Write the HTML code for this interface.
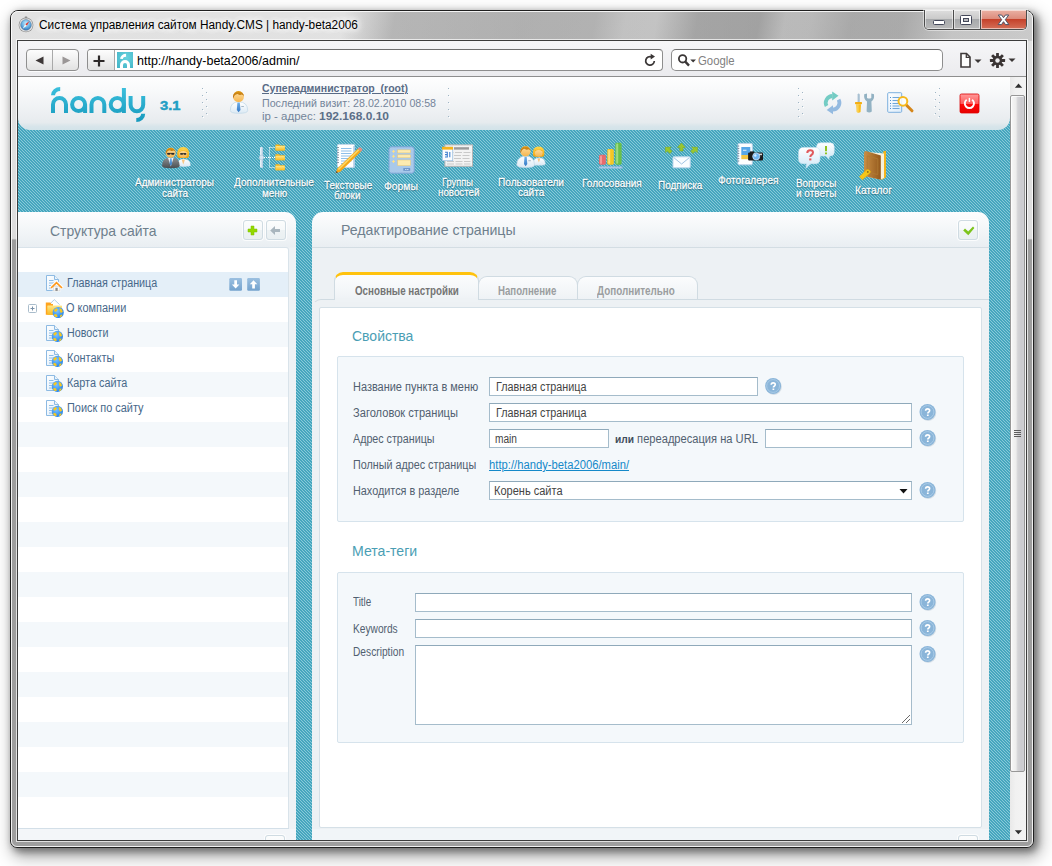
<!DOCTYPE html>
<html lang="ru">
<head>
<meta charset="utf-8">
<title>Handy.CMS</title>
<style>
*{box-sizing:border-box;margin:0;padding:0}
html,body{width:1052px;height:866px;overflow:hidden;background:#fff}
body{font-family:"Liberation Sans",sans-serif;font-size:12px;color:#4a5b6c;position:relative}
.abs{position:absolute}
.t{position:absolute;white-space:nowrap;transform-origin:0 50%;line-height:1}

/* ---------- window frame ---------- */
#shadow{left:10px;top:10px;width:1024px;height:838px;border-radius:8px;
  box-shadow:3px 3px 7px 1px rgba(0,0,0,.40),4px 7px 16px 3px rgba(0,0,0,.30)}
#win{left:10px;top:10px;width:1024px;height:838px;border-radius:8px 8px 7px 7px;border:1px solid #1f1f1f;overflow:hidden;
  background:#c9c9c9}
#glass{left:0;top:0;width:1022px;height:836px;
  background:linear-gradient(180deg,#e2e2e2 0,#dddddd 26%,#dbdbdb 27%,#dcdcdc 27.2%,#9d9d9d 27.4%,#9e9e9e 100%)}
#tglass{left:0;top:0;width:1022px;height:30px;
  background:linear-gradient(100deg,rgba(80,80,80,0) 0,rgba(80,80,80,0) 32.500%,rgba(80,80,80,.30) 37.500%,rgba(80,80,80,.34) 50%,rgba(80,80,80,.33) 57%,rgba(80,80,80,.22) 60%,rgba(80,80,80,.21) 63%,rgba(80,80,80,.42) 67%,rgba(80,80,80,.44) 73%,rgba(80,80,80,.27) 75.500%,rgba(80,80,80,.28) 78%,rgba(80,80,80,.39) 82%,rgba(80,80,80,.38) 87%,rgba(80,80,80,.20) 92%,rgba(80,80,80,.16) 100%)}
#glassin{left:0;top:0;width:1022px;height:836px;border:1px solid rgba(255,255,255,.85);border-radius:7px 7px 6px 6px}
#client{left:17px;top:40px;width:1010px;height:801px;border:1px solid #3c3c3c;background:#fff;overflow:hidden}
#clientglow{left:16px;top:39px;width:1012px;height:803px;border:1px solid rgba(255,255,255,.7)}


/* ---------- title ---------- */
#ttl{font-size:12px;color:#000;text-shadow:0 0 6px #fff,0 0 8px #fff,0 0 10px #fff,0 0 12px rgba(255,255,255,.9)}
#cap{left:924px;top:10px;width:103px;height:20px;border:1px solid #4b4b4b;border-top:none;border-radius:0 0 5px 5px;overflow:hidden;box-shadow:0 0 0 1px rgba(255,255,255,.45)}
#cap div{position:absolute;top:0;height:19px;box-shadow:inset 0 0 0 1px rgba(255,255,255,.55)}
.cg{background:linear-gradient(#dedede 0,#c9c9c9 48%,#a7a9ab 50%,#b9b9b9 100%)}
.cr{background:linear-gradient(#eab1a4 0,#dc8a7a 48%,#c5422b 50%,#d56f58 100%)}

/* ---------- toolbar ---------- */
#tb{left:0;top:0;width:1008px;height:36px;background:linear-gradient(#f6f6f8,#ebebee);border-bottom:1px solid #8e8e8e}
.btn{border:1px solid #8f8f8f;border-radius:4px;background:linear-gradient(#fdfdfd,#e2e2e2);box-shadow:0 1px 0 rgba(255,255,255,.8)}
.inp{border:1px solid #8e8e8e;border-top-color:#6f6f6f;border-radius:4px;background:#fff}


/* ---------- cms header ---------- */
#hd{left:0;top:0;width:992px;height:53px;border-radius:0 0 12px 12px;background:linear-gradient(#fefefe 0,#f9fafb 22%,#f2f4f6 48%,#ebeef1 74%,#e6ebee 86%,#d8e5ea 93%,#d2e3e9 100%)}
.dots{width:5px;height:32px;top:11px;background:
  radial-gradient(circle at 1px 1px,#aebdc8 0,#aebdc8 .7px,transparent .9px) 0 0/5px 8px,
  radial-gradient(circle at 1px 1px,#aebdc8 0,#aebdc8 .7px,transparent .9px) 3px 4px/5px 8px}
.u1{font-family:"Liberation Sans",sans-serif;font-weight:bold;font-size:10px;color:#596b86;text-decoration:underline}
.u2{font-size:11px;color:#74859a}
.ml{font-size:11px;color:#fff;-webkit-text-stroke:.3px rgba(255,255,255,.9);text-shadow:0 1px 1px rgba(25,85,105,.75),0 0 2px rgba(25,85,105,.45)}
.mi{position:absolute;white-space:nowrap;text-align:center;color:#fff;font-size:10.5px;line-height:10px;transform:translateX(-50%);text-shadow:0 1px 1px rgba(20,80,100,.55)}


/* ---------- panels (coords relative to #page: x-18, y-77) ---------- */
#lp{left:0;top:135px;width:278px;height:640px;border-radius:0 11px 0 0;background:linear-gradient(#fdfdfe 0,#f3f6f8 18px,#e9eef2 35px,#eef2f5 36px,#eef2f5 100%)}
#lpin{left:0;top:170px;width:271px;height:582px;border-radius:0 3px 0 0;background:#fff;border:1px solid #d9e3ea;border-left:none}
.row{position:absolute;left:0;width:270px;height:25px;background:#f4f8fb}
.sel{background:#e4eff8}
.tr{position:absolute;white-space:nowrap;font-size:12px;line-height:1;color:#47688a;transform-origin:0 50%}
.hdt{font-size:15px;color:#6e7f8d}
.sq{position:absolute;width:20px;height:20px;border:1px solid #cfdbe2;border-radius:3px;background:linear-gradient(#fcfdfd 0,#f6f9fa 50%,#edf2f4 52%,#eaf0f2 100%);box-shadow:0 0 0 1px rgba(255,255,255,.75)}
#rp{left:294px;top:135px;width:677px;height:640px;border-radius:11px 11px 0 0;background:linear-gradient(#fdfdfe 0,#f3f6f8 18px,#e9eef2 35px,#d3dde3 35px,#d3dde3 36px,#edf1f4 36px,#edf1f4 100%)}
#tabwrap{left:294px;top:222px;width:677px;height:560px;border-top:1px solid #d0dbe2;border-left:1px solid rgba(208,219,226,0);border-radius:9px 0 0 0;background:#edf1f4}
#rpin{left:301px;top:230px;width:663px;height:521px;background:#fff;border:1px solid #d5e0e7;border-radius:2px}
.tab{position:absolute;border:1px solid #d0dbe2;border-bottom:none;border-radius:9px 9px 0 0;background:linear-gradient(#fbfcfd,#eef2f5)}
.tabt{position:absolute;white-space:nowrap;font-weight:bold;font-size:12px;line-height:1;transform-origin:0 50%}
.h2{position:absolute;white-space:nowrap;font-size:15px;line-height:1;color:#4a9eb4;transform-origin:0 50%}
.fs{position:absolute;background:#f4f8fb;border:1px solid #d6e3ec;border-radius:2px}
.lb{position:absolute;white-space:nowrap;font-size:12px;line-height:1;color:#516070;transform-origin:0 50%}
.fi{position:absolute;height:19px;background:#fff;border:1px solid #a5bccb;border-top-color:#8fa9ba}
.fv{position:absolute;white-space:nowrap;font-size:12px;line-height:1;color:#444;transform-origin:0 50%}

/* ---------- page ---------- */
#page{left:0;top:36px;width:992px;height:763px;overflow:hidden;background:#4faac2}
#sb{left:992px;top:36px;width:16px;height:763px;background:linear-gradient(90deg,#e9e9e9,#f1f1f1 35%,#f3f3f3)}
</style>
</head>
<body>
<div id="shadow" class="abs"></div>
<div id="win" class="abs">
  <div id="glass" class="abs"></div>
  <div id="tglass" class="abs"></div>
  <div id="glassin" class="abs"></div>
</div>

<!-- title bar -->
<svg class="abs" style="left:18px;top:16px" width="16" height="17" viewBox="0 0 18 19">
  <defs><radialGradient id="cmp" cx="50%" cy="35%" r="65%"><stop offset="0" stop-color="#c9ebfc"/><stop offset=".6" stop-color="#62aee3"/><stop offset="1" stop-color="#2f6fb4"/></radialGradient></defs>
  <circle cx="9" cy="10" r="8.300" fill="#8f8f8f"/><circle cx="9" cy="10" r="7.500" fill="#ececec"/><circle cx="9" cy="10" r="6.100" fill="url(#cmp)" stroke="#6d7f92" stroke-width=".6"/>
  <path d="M12.800 5.800 L9.900 10.900 L8.100 9.300 Z" fill="#e2382c"/><path d="M5.200 14.200 L8.100 9.300 L9.900 10.900 Z" fill="#f6f6f6"/>
  <rect x="7.600" y="0.600" width="2.800" height="2" rx=".6" fill="#8d8d8d"/>
</svg>
<div id="ttl" class="t" style="left:39.0px;top:18.7px;transform:scaleX(0.985)">Система управления сайтом Handy.CMS | handy-beta2006</div>
<div id="cap" class="abs">
  <div class="cg" style="left:0;width:28px"></div>
  <div class="cg" style="left:28px;width:27px;border-left:1px solid #4b4b4b"></div>
  <div class="cr" style="left:55px;width:47px;border-left:1px solid #4b4b4b"></div>
</div>
<svg class="abs" style="left:924px;top:10px" width="103" height="20" viewBox="0 0 103 20">
  <rect x="9.5" y="10.5" width="11" height="4" rx="1" fill="#fff" stroke="#44485a" stroke-width="1"/>
  <rect x="36.500" y="5.500" width="11" height="9" rx="1" fill="#fff" stroke="#44485a" stroke-width="1"/>
  <rect x="39.500" y="8.500" width="5" height="3" fill="#b9babd" stroke="#44485a" stroke-width="1"/>
  <path d="M74.300 5 L77.600 5 L79.500 7.700 L81.400 5 L84.700 5 L81.300 9.700 L84.900 14.600 L81.500 14.600 L79.500 11.700 L77.500 14.600 L74.100 14.600 L77.700 9.700 Z" fill="#fff" stroke="#4d5468" stroke-width="1" stroke-linejoin="round"/>
</svg>
<div id="clientglow" class="abs"></div>
<div id="client" class="abs">
  <div id="tb" class="abs">
    <div class="abs btn" style="left:8px;top:8px;width:53px;height:22px"></div>
    <div class="abs" style="left:34px;top:9px;width:1px;height:20px;background:#a9a9a9"></div>
    <svg class="abs" style="left:8px;top:9px" width="53" height="21" viewBox="0 0 53 21"><path d="M17.500 6.500 L17.500 14.500 L9.500 10.500 Z" fill="#3d3737"/><path d="M36.500 6.500 L36.500 14.500 L44.500 10.500 Z" fill="#9a9696"/></svg>
    <div class="abs inp" style="left:69px;top:8px;width:576px;height:22px"></div>
    <div class="abs" style="left:70px;top:9px;width:27px;height:20px;border-radius:3px 0 0 3px;background:linear-gradient(#fdfdfd,#e2e2e2);border-right:1px solid #a9a9a9"></div>
    <svg class="abs" style="left:74px;top:13px" width="14" height="14" viewBox="0 0 14 14"><path d="M7 1.500 V12.500 M1.500 7 H12.500" stroke="#2d2929" stroke-width="2.200" fill="none"/></svg>
    <svg class="abs" style="left:99px;top:11px" width="16" height="16" viewBox="0 0 16 16"><defs><radialGradient id="fv" cx=".6" cy=".35" r=".8"><stop offset="0" stop-color="#66d2de"/><stop offset="1" stop-color="#45b6c8"/></radialGradient></defs><rect width="16" height="16" fill="url(#fv)"/><path d="M4.500 16 V13 A3.500 3.500 0 0 1 11.500 13 V16" fill="none" stroke="#fff" stroke-width="3"/><path d="M4.500 6.900 A4.600 3.700 0 0 1 9.100 3.300" fill="none" stroke="#fff" stroke-width="2.900"/></svg>
    <div id="url" class="t" style="left:119.0px;top:13.1px;font-size:13px;color:#000;transform:scaleX(0.961)">http://handy-beta2006/admin/</div>
    <svg class="abs" style="left:625px;top:12px" width="15" height="15" viewBox="0 0 15 15"><path d="M11.300 8 A4.300 4.300 0 1 1 8.600 3.900" fill="none" stroke="#3a3636" stroke-width="1.700"/><path d="M7.700 0.700 L12 3.600 L7.700 6.600 Z" fill="#3a3636"/></svg>
    <div class="abs inp" style="left:653px;top:8px;width:272px;height:22px;border-radius:5px"></div>
    <svg class="abs" style="left:659px;top:12px" width="22" height="15" viewBox="0 0 22 15"><circle cx="5.600" cy="5.800" r="3.700" fill="none" stroke="#3a3636" stroke-width="1.800"/><path d="M8.300 8.600 L12 12.600" stroke="#3a3636" stroke-width="2.300"/><path d="M13.300 6.500 H19 L16.150 9.600 Z" fill="#3a3636"/></svg>
    <div id="ggl" class="t" style="left:680.0px;top:13.1px;font-size:13px;color:#818181;transform:scaleX(0.873)">Google</div>
    <svg class="abs" style="left:941px;top:11px" width="26" height="17" viewBox="0 0 26 17"><path d="M2 1.500 H7.500 L11 5 V15 H2 Z" fill="#fdfdfd" stroke="#3f3a3a" stroke-width="1.600" stroke-linejoin="miter"/><path d="M7.300 1.500 V5.300 H11" fill="none" stroke="#3f3a3a" stroke-width="1.300"/><path d="M15.500 7.500 H22.500 L19 11 Z" fill="#3a3636"/></svg>
    <svg class="abs" style="left:970px;top:10px" width="30" height="19" viewBox="0 0 30 19"><g transform="translate(9.500 9.500)" fill="#3a3434"><circle r="4.800"/><g id="tt"><rect x="-1.400" y="-7.600" width="2.800" height="15.200" rx=".4"/></g><use href="#tt" transform="rotate(45)"/><use href="#tt" transform="rotate(90)"/><use href="#tt" transform="rotate(135)"/><circle r="2.200" fill="#eeeef0"/></g><path d="M20.500 7.500 H27.500 L24 11 Z" fill="#3a3636"/></svg>
  </div>
  <div id="page" class="abs">
    <svg class="abs" style="left:0;top:0" width="992" height="763" shape-rendering="crispEdges">
      <defs><pattern id="st" width="3" height="3" patternUnits="userSpaceOnUse">
        <rect width="3" height="3" fill="#45a6be"/>
        <rect x="0" y="0" width="1" height="1" fill="#88c9d9"/>
        <rect x="1" y="1" width="1" height="1" fill="#88c9d9"/>
        <rect x="2" y="2" width="1" height="1" fill="#88c9d9"/>
      </pattern></defs>
      <rect width="992" height="763" fill="url(#st)"/>
    </svg>
    <div id="hd" class="abs"></div>
    <!-- logo -->
    <svg class="abs" style="left:0;top:0" width="200" height="53" viewBox="18 77 200 53">
      <defs><linearGradient id="lg" gradientUnits="userSpaceOnUse" x1="0" y1="87" x2="0" y2="122"><stop offset="0" stop-color="#3cc0dd"/><stop offset="1" stop-color="#1799bd"/></linearGradient></defs>
      <g fill="none" stroke="url(#lg)" stroke-width="4">
        <path d="M53 95.300 A7.200 6.500 0 0 1 60.200 89"/>
        <path d="M53 113 V104.500 A6.500 6.500 0 0 1 66 104.500 V113"/>
        <circle cx="78.600" cy="104.500" r="6.500"/><path d="M85.100 104.500 V113"/>
        <path d="M91.500 113 V104.500 A6.400 6.500 0 0 1 104.300 104.500 V113"/>
        <circle cx="117.300" cy="104.500" r="6.600"/><path d="M123.900 88 V113"/>
        <path d="M130.600 96 V104.800 A6.300 6.500 0 0 0 143.200 104.800 V96"/>
        <path d="M143.200 113.800 A6.900 6.200 0 0 1 136.300 120"/>
      </g>
    </svg>
    <div id="ver" class="t" style="left:142.4px;top:21.9px;font-size:13px;font-weight:bold;color:#219fc4;-webkit-text-stroke:.45px #219fc4;transform:scaleX(1.134)">3.1</div>
    <div id="u1" class="t u1" style="left:244.0px;top:7.0px;transform:scaleX(1.051)">Суперадминистратор&nbsp; (root)</div>
    <div id="u2" class="t u2" style="left:244.0px;top:21.1px;transform:scaleX(0.969)">Последний визит: 28.02.2010 08:58</div>
    <div id="u3" class="t u2" style="left:244.0px;top:33.7px;transform:scaleX(1.042)">ip - адрес: <b id="ip" style="color:#5c6f88;font-size:11.5px">192.168.0.10</b></div>
    <div id="m1a" class="t ml" style="left:117.4px;top:100.1px;transform:scaleX(0.905)">Администраторы</div>
    <div id="m1b" class="t ml" style="left:144.0px;top:110.5px;transform:scaleX(0.903)">сайта</div>
    <div id="m2a" class="t ml" style="left:216.1px;top:100.1px;transform:scaleX(0.916)">Дополнительные</div>
    <div id="m2b" class="t ml" style="left:243.5px;top:110.5px;transform:scaleX(0.899)">меню</div>
    <div id="m3a" class="t ml" style="left:305.8px;top:103.4px;transform:scaleX(0.900)">Текстовые</div>
    <div id="m3b" class="t ml" style="left:316.4px;top:113.4px;transform:scaleX(0.897)">блоки</div>
    <div id="m4" class="t ml" style="left:366.3px;top:103.8px;transform:scaleX(0.940)">Формы</div>
    <div id="m5a" class="t ml" style="left:424.4px;top:100.1px;transform:scaleX(0.843)">Группы</div>
    <div id="m5b" class="t ml" style="left:420.0px;top:109.8px;transform:scaleX(0.888)">новостей</div>
    <div id="m6a" class="t ml" style="left:480.0px;top:100.1px;transform:scaleX(0.919)">Пользователи</div>
    <div id="m6b" class="t ml" style="left:499.5px;top:109.9px;transform:scaleX(0.910)">сайта</div>
    <div id="m7" class="t ml" style="left:564.3px;top:101.3px;transform:scaleX(0.913)">Голосования</div>
    <div id="m8" class="t ml" style="left:640.4px;top:102.5px;transform:scaleX(0.906)">Подписка</div>
    <div id="m9" class="t ml" style="left:699.7px;top:98.4px;transform:scaleX(0.918)">Фотогалерея</div>
    <div id="m10a" class="t ml" style="left:777.9px;top:100.8px;transform:scaleX(0.894)">Вопросы</div>
    <div id="m10b" class="t ml" style="left:777.9px;top:111.2px;transform:scaleX(0.905)">и ответы</div>
    <div id="m11" class="t ml" style="left:836.7px;top:107.5px;transform:scaleX(0.925)">Каталог</div>
    <!-- left panel -->
    <div id="lp" class="abs"></div>
    <div id="lpin" class="abs"></div>
    <div class="row sel" style="top:195px"></div><div class="row" style="top:245px"></div><div class="row" style="top:295px"></div><div class="row" style="top:345px"></div><div class="row" style="top:395px"></div><div class="row" style="top:445px"></div><div class="row" style="top:495px"></div><div class="row" style="top:545px"></div><div class="row" style="top:595px"></div><div class="row" style="top:645px"></div><div class="row" style="top:695px"></div>
    <div class="abs" style="left:0;top:751px;width:271px;height:1px;background:#d3dfe8"></div><div class="abs" style="left:0;top:752px;width:278px;height:11px;background:#f3f6f9"></div>
    <div id="lpt" class="tr hdt" style="left:31.5px;top:145.7px;transform:scaleX(0.929)">Структура сайта</div>
    <div class="sq" style="left:225px;top:143px"></div>
    <div class="sq" style="left:248px;top:143px"></div>
    <div class="sq" style="left:247px;top:758px"></div>
    <div id="n1" class="tr" style="left:48.9px;top:200.2px;transform:scaleX(0.896)">Главная страница</div>
    <div id="n2" class="tr" style="left:47.9px;top:225.2px;transform:scaleX(0.911)">О компании</div>
    <div id="n3" class="tr" style="left:48.9px;top:250.2px;transform:scaleX(0.891)">Новости</div>
    <div id="n4" class="tr" style="left:48.9px;top:275.2px;transform:scaleX(0.914)">Контакты</div>
    <div id="n5" class="tr" style="left:48.9px;top:300.2px;transform:scaleX(0.902)">Карта сайта</div>
    <div id="n6" class="tr" style="left:48.9px;top:325.2px;transform:scaleX(0.910)">Поиск по сайту</div>

    <!-- right panel -->
    <div id="rp" class="abs"></div>
    <div id="rpt" class="tr hdt" style="left:323.0px;top:144.5px;transform:scaleX(0.941)">Редактирование страницы</div>
    <div class="sq" style="left:940px;top:143px"></div>
    <div class="tab" style="left:460px;top:199px;width:100px;height:24px"></div>
    <div class="tab" style="left:559px;top:199px;width:121px;height:24px"></div>
    <div id="tabwrap" class="abs"></div>
    <div class="tab" style="left:316px;top:195px;width:145px;height:28px;border-top:3px solid #ffc20d;background:linear-gradient(#fbfcfd 0,#f4f7f9 60%,#eef2f5 100%)"></div>
    <div class="abs" style="left:317px;top:221px;width:143px;height:4px;background:#eef2f5"></div>
    <div id="tb1" class="tabt" style="left:337.0px;top:207.6px;color:#747474;transform:scaleX(0.815)">Основные настройки</div>
    <div id="tb2" class="tabt" style="left:480.4px;top:207.6px;color:#9b9ea0;transform:scaleX(0.804)">Наполнение</div>
    <div id="tb3" class="tabt" style="left:579.4px;top:207.6px;color:#9b9ea0;transform:scaleX(0.822)">Дополнительно</div>
    <div id="rpin" class="abs"></div>
    <div class="abs" style="left:294px;top:752px;width:677px;height:11px;background:#f1f5f8"></div>
    <div class="sq" style="left:940px;top:758px"></div>
    <div id="h21" class="h2" style="left:334.0px;top:251.3px;transform:scaleX(0.932)">Свойства</div>
    <div class="fs" style="left:319px;top:279px;width:627px;height:166px"></div>
    <div id="l1" class="lb" style="left:334.8px;top:303.8px;transform:scaleX(0.913)">Название пункта в меню</div>
    <div id="l2" class="lb" style="left:334.8px;top:329.8px;transform:scaleX(0.925)">Заголовок страницы</div>
    <div id="l3" class="lb" style="left:334.8px;top:355.8px;transform:scaleX(0.892)">Адрес страницы</div>
    <div id="l4" class="lb" style="left:334.8px;top:381.8px;transform:scaleX(0.897)">Полный адрес страницы</div>
    <div id="l5" class="lb" style="left:334.8px;top:407.8px;transform:scaleX(0.904)">Находится в разделе</div>
    <div class="fi" style="left:471px;top:300px;width:269px"></div>
    <div class="fi" style="left:471px;top:326px;width:423px"></div>
    <div class="fi" style="left:471px;top:352px;width:120px"></div>
    <div class="fi" style="left:747px;top:352px;width:147px"></div>
    <div class="fi" style="left:471px;top:404px;width:423px"></div>
    <div id="v1" class="fv" style="left:478.3px;top:303.8px;transform:scaleX(0.898)">Главная страница</div>
    <div id="v2" class="fv" style="left:478.3px;top:329.8px;transform:scaleX(0.898)">Главная страница</div>
    <div id="v3" class="fv" style="left:477.0px;top:355.8px;transform:scaleX(0.846)">main</div>
    <div id="v4" class="lb" style="left:597.0px;top:355.8px;transform:scaleX(0.927)"><b style="font-size:11px;color:#3f4d5c">или</b> переадресация на URL</div>
    <div id="v5" class="fv" style="left:471.0px;top:381.8px;color:#1589c9;text-decoration:underline;transform:scaleX(0.937)">http://handy-beta2006/main/</div>
    <div id="v6" class="fv" style="left:476.0px;top:407.8px;transform:scaleX(0.918)">Корень сайта</div>
    <svg class="abs" style="left:881px;top:412px" width="9" height="5" viewBox="0 0 9 5"><path d="M0.500 0 H8.500 L4.500 4.500 Z" fill="#111"/></svg>
    <div id="h22" class="h2" style="left:334.0px;top:466.2px;transform:scaleX(0.939)">Мета-теги</div>
    <div class="fs" style="left:319px;top:495px;width:627px;height:171px"></div>
    <div id="l6" class="lb" style="left:334.8px;top:519.4px;transform:scaleX(0.819)">Title</div>
    <div id="l7" class="lb" style="left:334.8px;top:545.6px;transform:scaleX(0.848)">Keywords</div>
    <div id="l8" class="lb" style="left:334.8px;top:569.0px;transform:scaleX(0.851)">Description</div>
    <div class="fi" style="left:397px;top:516px;width:497px"></div>
    <div class="fi" style="left:397px;top:542px;width:497px"></div>
    <div class="fi" style="left:397px;top:568px;width:497px;height:80px"></div>
    <svg class="abs" style="left:883px;top:637px" width="10" height="10" viewBox="0 0 10 10"><path d="M1 9 L9 1 M5 9 L9 5" stroke="#6b6b6b" stroke-width="1"/></svg>
    <!-- ===== icon overlay (screen coordinates) ===== -->
    <svg class="abs" style="left:0;top:0" width="992" height="763" viewBox="18 77 992 763">
      <defs>
        <linearGradient id="gFace" x1="0" y1="0" x2="0" y2="1"><stop offset="0" stop-color="#fde0a4"/><stop offset="1" stop-color="#f7b54e"/></linearGradient>
        <linearGradient id="gHair" x1="0" y1="0" x2="0" y2="1"><stop offset="0" stop-color="#dd9a17"/><stop offset="1" stop-color="#a85a0c"/></linearGradient>
        <linearGradient id="gBlond" x1="0" y1="0" x2="0" y2="1"><stop offset="0" stop-color="#fdd54a"/><stop offset="1" stop-color="#f0a512"/></linearGradient>
        <linearGradient id="gShirt" x1="0" y1="0" x2="0" y2="1"><stop offset="0" stop-color="#ffffff"/><stop offset="1" stop-color="#dbe9f4"/></linearGradient>
        <linearGradient id="gSuit" x1="0" y1="0" x2="0" y2="1"><stop offset="0" stop-color="#8f9396"/><stop offset="1" stop-color="#4a4d50"/></linearGradient>
        <linearGradient id="gTie" x1="0" y1="0" x2="0" y2="1"><stop offset="0" stop-color="#6fb0ea"/><stop offset="1" stop-color="#3478c4"/></linearGradient>
        <linearGradient id="gFold" x1="0" y1="0" x2="0" y2="1"><stop offset="0" stop-color="#fee88a"/><stop offset="1" stop-color="#f8b91f"/></linearGradient>
        <linearGradient id="gPage" x1="0" y1="0" x2="1" y2="1"><stop offset="0" stop-color="#ffffff"/><stop offset="1" stop-color="#dcecfa"/></linearGradient>
        <linearGradient id="gRed" x1="0" y1="0" x2="0" y2="1"><stop offset="0" stop-color="#ff9a9a"/><stop offset=".5" stop-color="#ff5c5c"/><stop offset=".52" stop-color="#ff0a0a"/><stop offset="1" stop-color="#e60000"/></linearGradient>
        <radialGradient id="gGlobe" cx=".4" cy=".35" r=".7"><stop offset="0" stop-color="#7cc2ff"/><stop offset="1" stop-color="#1f7fe6"/></radialGradient>
        <linearGradient id="gBook" x1="0" y1="0" x2="1" y2="0"><stop offset="0" stop-color="#c98f45"/><stop offset="1" stop-color="#93581c"/></linearGradient>
        <linearGradient id="gBtnB" x1="0" y1="0" x2="0" y2="1"><stop offset="0" stop-color="#9cc0e0"/><stop offset="1" stop-color="#74a2cd"/></linearGradient>
        <linearGradient id="gBub" x1="0" y1="0" x2="0" y2="1"><stop offset="0" stop-color="#ffffff"/><stop offset="1" stop-color="#cfe8f6"/></linearGradient>
        <g id="sep" shape-rendering="crispEdges"><rect x="0" y="88" width="1" height="1" fill="#9fb5c5"/><rect x="1" y="89" width="1" height="1" fill="#fff"/><rect x="0" y="95" width="1" height="1" fill="#9fb5c5"/><rect x="1" y="96" width="1" height="1" fill="#fff"/><rect x="0" y="102" width="1" height="1" fill="#9fb5c5"/><rect x="1" y="103" width="1" height="1" fill="#fff"/><rect x="0" y="109" width="1" height="1" fill="#9fb5c5"/><rect x="1" y="110" width="1" height="1" fill="#fff"/><rect x="0" y="116" width="1" height="1" fill="#9fb5c5"/><rect x="1" y="117" width="1" height="1" fill="#fff"/><rect x="4" y="92" width="1" height="1" fill="#9fb5c5"/><rect x="5" y="93" width="1" height="1" fill="#fff"/><rect x="4" y="99" width="1" height="1" fill="#9fb5c5"/><rect x="5" y="100" width="1" height="1" fill="#fff"/><rect x="4" y="106" width="1" height="1" fill="#9fb5c5"/><rect x="5" y="107" width="1" height="1" fill="#fff"/><rect x="4" y="113" width="1" height="1" fill="#9fb5c5"/><rect x="5" y="114" width="1" height="1" fill="#fff"/></g><g id="sepB" shape-rendering="crispEdges"><rect x="0" y="88" width="1" height="1" fill="#9fb5c5"/><rect x="1" y="89" width="1" height="1" fill="#fff"/><rect x="0" y="95" width="1" height="1" fill="#9fb5c5"/><rect x="1" y="96" width="1" height="1" fill="#fff"/><rect x="0" y="102" width="1" height="1" fill="#9fb5c5"/><rect x="1" y="103" width="1" height="1" fill="#fff"/><rect x="0" y="109" width="1" height="1" fill="#9fb5c5"/><rect x="1" y="110" width="1" height="1" fill="#fff"/><rect x="0" y="116" width="1" height="1" fill="#9fb5c5"/><rect x="1" y="117" width="1" height="1" fill="#fff"/></g><g id="sepC" shape-rendering="crispEdges"><rect x="4" y="88" width="1" height="1" fill="#9fb5c5"/><rect x="3" y="89" width="1" height="1" fill="#fff"/><rect x="4" y="95" width="1" height="1" fill="#9fb5c5"/><rect x="3" y="96" width="1" height="1" fill="#fff"/><rect x="4" y="102" width="1" height="1" fill="#9fb5c5"/><rect x="3" y="103" width="1" height="1" fill="#fff"/><rect x="4" y="109" width="1" height="1" fill="#9fb5c5"/><rect x="3" y="110" width="1" height="1" fill="#fff"/><rect x="4" y="116" width="1" height="1" fill="#9fb5c5"/><rect x="3" y="117" width="1" height="1" fill="#fff"/><rect x="0" y="92" width="1" height="1" fill="#9fb5c5"/><rect x="-1" y="93" width="1" height="1" fill="#fff"/><rect x="0" y="99" width="1" height="1" fill="#9fb5c5"/><rect x="-1" y="100" width="1" height="1" fill="#fff"/><rect x="0" y="106" width="1" height="1" fill="#9fb5c5"/><rect x="-1" y="107" width="1" height="1" fill="#fff"/><rect x="0" y="113" width="1" height="1" fill="#9fb5c5"/><rect x="-1" y="114" width="1" height="1" fill="#fff"/></g>
        <g id="help"><circle cx="0.700" cy="0.900" r="8" fill="#b9c9d6" opacity=".55"/><circle r="8" fill="#8ab5d9"/><circle r="6.400" fill="none" stroke="#a9cbe7" stroke-width="1"/><g transform="translate(0.100 0.300) scale(.76)"><path d="M-2.600 -1.900 Q-2.600 -4.600 0 -4.600 Q2.700 -4.600 2.700 -2.300 Q2.700 -0.900 1.300 -0.100 Q0.300 0.500 0.300 1.500" fill="none" stroke="#fff" stroke-width="2.200"/><rect x="-0.900" y="2.900" width="2.300" height="2" fill="#fff"/></g></g>
        <g id="globe"><circle r="5.600" fill="url(#gGlobe)"/><path d="M-4.300 -2.600 L-2 -4.300 L-0.300 -3.300 L-1.600 -1.300 L-3.300 -0.600 Z M1.300 -4.600 L3.600 -3.300 L4.600 -0.600 L2.600 0.400 L1.600 -1.600 Z M-3.600 1.400 L-1.300 2 L-0.600 4.400 L-2.600 4.600 L-4.300 3 Z M2.300 2.400 L4.300 2 L3.300 4.300 L1.600 4.700 Z" fill="#f8c81f"/></g>
        <g id="pg"><path d="M0.500 0.500 H8.500 L12.500 4.500 V15.500 H0.500 Z" fill="url(#gPage)" stroke="#8dbae3" stroke-width="1"/><path d="M8.500 0.500 V4.500 H12.500" fill="#eaf3fb" stroke="#8dbae3" stroke-width="1"/><path d="M3 5.500 H7.500 M3 8 H10 M3 10.500 H10 M3 13 H10" stroke="#8fbde6" stroke-width="1"/></g>
      </defs>

      <use href="#sep" x="202"/><use href="#sepB" x="448"/><use href="#sep" x="798"/><use href="#sepC" x="935"/>
      <!-- header: user -->
      <path d="M230.300 110.500 Q230.300 102 238.700 101.800 Q247.700 102 247.700 110.500 Q247.700 113.300 239 113.300 Q230.300 113.300 230.300 110.500 Z" fill="url(#gShirt)" stroke="#c3d9e8" stroke-width=".8"/>
      <path d="M237.400 102.400 H239.800 L240.500 110 L238.600 112.300 L236.800 110 Z" fill="url(#gTie)"/>
      <rect x="241.300" y="106" width="2.600" height=".9" fill="#9db0c0"/>
      <circle cx="238.500" cy="96.600" r="5.500" fill="url(#gFace)"/>
      <path d="M233 96.600 A5.500 5.500 0 0 1 244 96.600 Q243.600 94.800 241.800 94.400 Q239.600 95.600 237.800 93.900 Q235.700 93.800 234.500 95.600 Q233.600 97.300 233.300 98.600 Q233 97.600 233 96.600 Z" fill="url(#gHair)"/>

      <!-- header: refresh / tools / page-search / power -->
      <g fill="none" stroke-width="3.800">
        <path d="M826.6 106.0 A6.8 6.8 0 0 1 832.4 96.0" stroke="#74ccc4"/>
        <path d="M838.6 99.6 A6.8 6.8 0 0 1 832.8 109.6" stroke="#94bae0"/>
      </g>
      <path d="M832.200 91.400 L838.500 95.700 L832.200 100.400 Z" fill="#74ccc4"/>
      <path d="M833 105.200 L826.700 109.900 L833 114.200 Z" fill="#94bae0"/>
      <path d="M857.600 94.600 L858.700 93.300 L859.800 94.600 V102.300 H857.600 Z" fill="#a8c0d2"/>
      <rect x="855" y="102" width="7" height="2.200" rx=".6" fill="#f4ae12"/>
      <path d="M856.300 104.200 H861 L860.600 112 Q858.600 113.300 856.700 112 Z" fill="#f8bd1e"/><rect x="857.200" y="104.200" width="1.300" height="8" fill="#fdd860"/>
      <path d="M864.200 94.300 Q863.600 99.600 867 101.400 L866.600 111.600 Q869.200 113.600 871.800 111.600 L871.400 101.400 Q874.600 99.600 874 94.300 L871.300 93.600 V98 Q869.200 99.200 867 98 V93.600 Z" fill="#92b2c3"/>
      <rect x="887.700" y="92.700" width="14" height="19.600" rx="1" fill="url(#gPage)" stroke="#7db0de" stroke-width="1"/>
      <path d="M892.500 97.500 H899.500 M892.500 100.500 H899.500 M892.500 103.500 H899.500 M892.500 106 H899.500 M892.500 108.500 H899.500" stroke="#6fa6d9" stroke-width="1"/><path d="M890.500 97 v1 m0 2 v1 m0 2 v1 m0 1.500 v1 m0 1.500 v1" stroke="#4d8fd0" stroke-width="1"/>
      <path d="M906.300 105 L912 110.800" stroke="#d5861a" stroke-width="3" stroke-linecap="round"/>
      <circle cx="902.900" cy="101.300" r="4.400" fill="#fdfefe" fill-opacity=".85" stroke="#f6b91c" stroke-width="2"/>
      <rect x="959" y="93" width="21" height="21" rx="2" fill="#e9f7fa"/>
      <rect x="960" y="94" width="19" height="19" rx="1.500" fill="url(#gRed)" stroke="#e20000" stroke-width=".8"/>
      <path d="M966.700 99.700 A4.600 4.600 0 1 0 972.100 99.700" fill="none" stroke="#fff" stroke-width="1.900"/><rect x="968.700" y="97.900" width="1.400" height="4" fill="#fff"/>

      <!-- menu 1: admins -->
      <path d="M177 165.300 Q177 159.300 183.300 159 Q190.600 159.300 190.600 165.300 Q190.600 166.700 183.800 166.700 Q177 166.700 177 165.300 Z" fill="url(#gShirt)"/>
      <path d="M181.600 159.600 L183.300 164.500 L185 159.600 Z" fill="#f7c784"/>
      <path d="M177.300 155.600 Q176.400 147 183.200 147 Q190 147 189 155.600 Q189.400 157.600 187.300 158 L179 158 Q176.900 157.600 177.300 155.600 Z" fill="url(#gBlond)"/>
      <circle cx="183.200" cy="153.800" r="4" fill="url(#gFace)"/><path d="M179.400 152.300 Q183.200 149.800 187 152.300 L187 151 Q183.200 148 179.400 151 Z" fill="url(#gBlond)"/>
      <rect x="180.300" y="153.300" width="2.600" height="1.500" rx=".6" fill="#2a2a2a"/><rect x="183.600" y="153.300" width="2.600" height="1.500" rx=".6" fill="#2a2a2a"/><rect x="180.300" y="153.300" width="5.900" height=".7" fill="#2a2a2a"/>
      <path d="M162 165.800 Q162 157.600 170.800 157.300 Q179.700 157.600 179.700 165.800 Q179.700 168.300 170.800 168.300 Q162 168.300 162 165.800 Z" fill="url(#gSuit)"/>
      <path d="M168 157.800 L170.800 166.500 L173.600 157.800 Z" fill="#f4f8fb"/><path d="M170 158.200 H171.700 L172.100 163.800 L170.800 166 L169.600 163.800 Z" fill="url(#gTie)"/>
      <circle cx="170.700" cy="152.700" r="5" fill="url(#gFace)"/>
      <path d="M165.700 152.700 A5 5 0 0 1 175.700 152.700 Q175.300 151 173.700 150.600 Q171.700 151.700 170 150.200 Q168 150.200 167 151.800 Q166.300 153.300 166 154.500 Q165.700 153.600 165.700 152.700 Z" fill="url(#gHair)"/>
      <rect x="167.200" y="152.900" width="3.100" height="1.800" rx=".7" fill="#2a2a2a"/><rect x="171.200" y="152.900" width="3.100" height="1.800" rx=".7" fill="#2a2a2a"/><rect x="167.200" y="152.900" width="7.100" height=".8" fill="#2a2a2a"/>

      <!-- menu 2: extra menu -->
      <rect x="260" y="147" width="3" height="20.700" rx="1" fill="#e6f0f8"/><rect x="261.600" y="147" width="1.400" height="20.700" fill="#b7cee2"/><circle cx="261.500" cy="157.400" r="2.300" fill="#d6e5f1" stroke="#a9c3d9" stroke-width=".6"/>
      <path d="M264 157.500 H275 M269.500 147.500 V167.500 M269.500 147.500 H275 M269.500 167.500 H275" fill="none" stroke="#fff" stroke-width="1" stroke-dasharray="1 1"/>
      <g id="fold3"><path d="M275.500 144.400 H279.200 L280.200 145.500 H284.800 V150.400 H275.500 Z" fill="#f7b51c"/><rect x="275.500" y="146" width="9.300" height="4.400" fill="url(#gFold)"/></g>
      <use href="#fold3" y="9.800"/><use href="#fold3" y="19.800"/>

      <!-- menu 3: text blocks -->
      <rect x="337.500" y="144.400" width="17" height="23" rx="1" fill="#fff" stroke="#c3d8ea" stroke-width="1"/>
      <rect x="353" y="146" width="2" height="22" fill="#a9c8e4" opacity=".7"/>
      <path d="M341 148.500 H351.500 M341 151 H351.500 M341 153.500 H351.500 M341 156 H351.500 M341 158.500 H351.500 M341 161 H351.500 M341 163.500 H348" stroke="#8fc0ea" stroke-width="1"/>
      <path d="M337 147.500 h2 m-2 2.500 h2 m-2 2.500 h2 m-2 2.500 h2 m-2 2.500 h2 m-2 2.500 h2 m-2 2.500 h2" stroke="#8a9aa8" stroke-width="1"/>
      <path d="M335.600 173.300 L337.300 168.600 L357.800 148.700 L361 151.600 L340.300 171.700 Z" fill="#f5a81a"/>
      <path d="M337.800 169 L358.300 149.200 L359.400 150.200 L338.900 170 Z" fill="#fdd866"/>
      <path d="M357.800 148.700 L359.400 147.300 Q361.600 147.300 362.300 149.900 L361 151.600 Z" fill="#e98e82"/><path d="M335.600 173.300 L336.400 171 L338 172.500 Z" fill="#5a4a3a"/>

      <!-- menu 4: forms -->
      <rect x="389" y="146.800" width="25.200" height="26.400" rx="2.500" fill="#a9c9ea" stroke="#7da6d6" stroke-width="1"/>
      <rect x="397.700" y="149.900" width="12.800" height="3" fill="#fdebb0" stroke="#e9c874" stroke-width=".5"/><rect x="397.700" y="154.800" width="12.800" height="3" fill="#fdebb0" stroke="#e9c874" stroke-width=".5"/><rect x="397.700" y="160" width="12.800" height="5.700" fill="#fdebb0" stroke="#e9c874" stroke-width=".5"/>
      <path d="M392 151.400 h3 m-1.500 -1.500 v3 M392 156.300 h3 m-1.500 -1.500 v3 M392 161.500 h3 m-1.500 -1.500 v3" stroke="#fbe08a" stroke-width="1"/>
      <rect x="403.300" y="168.100" width="6.900" height="2.700" fill="#6b94c9"/><rect x="405.200" y="169" width="1.200" height="1" fill="#dfeaf6"/><rect x="407.200" y="169" width="1.200" height="1" fill="#dfeaf6"/>

      <!-- menu 5: news groups -->
      <rect x="444.900" y="144.900" width="27.600" height="21.400" fill="#f3f3f3" stroke="#b5b5b5" stroke-width="1"/>
      <rect x="454" y="147.200" width="15" height="2.400" fill="#9b9b9b"/><path d="M446.500 152.500 H470.500 M454 155.500 H470.500 M454 158.500 H470.500 M447 161.500 H470.500 M447 164 H470.500" stroke="#c9c9c9" stroke-width="1.200" stroke-dasharray="7 1.500"/>
      <rect x="442.300" y="147.300" width="10.400" height="13.400" fill="#fbfdff" stroke="#9fc0e2" stroke-width=".8"/><rect x="442" y="146.800" width="11" height="2.800" fill="#f5b41d"/>
      <path d="M445 152.300 H447.300 V157 H445 M445 154.600 H447.300 M449.800 152 V157.300" stroke="#3f7fd0" stroke-width="1.100" fill="none"/>
      <!-- menu 6: users -->
      <path d="M533 164 Q533 158 539 157.700 Q545.300 158 545.300 164 Q545.300 165.300 539.100 165.300 Q533 165.300 533 164 Z" fill="url(#gShirt)" stroke="#c7dcea" stroke-width=".5"/>
      <path d="M537.300 158.200 L538.900 162.600 L540.500 158.200 Z" fill="#f7c784"/>
      <path d="M533 154.600 Q532.200 146.600 538.700 146.600 Q545.200 146.600 544.300 154.600 Q544.600 156.400 542.600 156.800 L534.800 156.800 Q532.700 156.400 533 154.600 Z" fill="url(#gBlond)"/>
      <circle cx="538.700" cy="152.800" r="3.900" fill="url(#gFace)"/><path d="M535 151.400 Q538.700 148.800 542.400 151.400 L542.400 150 Q538.700 147 535 150 Z" fill="url(#gBlond)"/>
      <path d="M516.800 165 Q516.800 156.400 525.600 156.100 Q534.500 156.400 534.500 165 Q534.500 167.500 525.600 167.500 Q516.800 167.500 516.800 165 Z" fill="url(#gShirt)" stroke="#c3d9e8" stroke-width=".7"/>
      <path d="M524.500 156.800 H526.700 L527.300 164 L525.600 166.200 L524 164 Z" fill="url(#gTie)"/><rect x="528.300" y="160.300" width="2.600" height=".9" fill="#9db0c0"/>
      <circle cx="525.500" cy="151.300" r="5.100" fill="url(#gFace)"/>
      <path d="M520.400 151.300 A5.100 5.100 0 0 1 530.600 151.300 Q530.200 149.600 528.600 149.200 Q526.500 150.300 524.800 148.800 Q522.800 148.800 521.700 150.400 Q521 151.900 520.700 153.100 Q520.400 152.200 520.400 151.300 Z" fill="url(#gHair)"/>

      <!-- menu 7: voting -->
      <rect x="598.700" y="166.400" width="23.800" height="2" rx=".8" fill="#a9c6e6"/>
      <rect x="599.100" y="154.700" width="6.700" height="10" rx="1.400" fill="#e86a6c"/><rect x="600" y="155.500" width="2" height="8.400" rx="1" fill="#f29a9a"/>
      <rect x="607.300" y="149" width="6.500" height="15.700" rx="1.400" fill="#f5c623"/><rect x="608.200" y="149.800" width="2" height="14" rx="1" fill="#fbe07a"/>
      <rect x="615.300" y="142.800" width="6.300" height="21.900" rx="1.400" fill="#69c04a"/><rect x="616.200" y="143.600" width="2" height="20.200" rx="1" fill="#9fdc84"/>

      <!-- menu 8: subscribe -->
      <rect x="673" y="156.800" width="17.200" height="11" rx="1" fill="#fafdff" stroke="#bcd6ec" stroke-width="1"/><path d="M674 157.800 L681.600 164 L689.200 157.800" fill="none" stroke="#9fc3e3" stroke-width="1"/>
      <g fill="#98c630" stroke="#7eab1f" stroke-width=".5"><path d="M681.400 143 L685.300 147.500 H683 V151 H679.800 V147.500 H677.500 Z"/><path d="M665.300 147.300 L671.200 147.100 L669.600 148.800 L672.100 151.300 L669.800 153.500 L667.300 151 L665.600 152.700 Z"/><path d="M697.500 147.300 L691.600 147.100 L693.200 148.800 L690.700 151.300 L693 153.500 L695.500 151 L697.200 152.700 Z"/></g>

      <!-- menu 9: gallery -->
      <rect x="738" y="143.400" width="14.300" height="21.400" rx="1" fill="#fdfeff" stroke="#b9d3ea" stroke-width="1"/>
      <path d="M737.300 146 h2 m-2 2.500 h2 m-2 2.500 h2 m-2 2.500 h2 m-2 2.500 h2 m-2 2.500 h2 m-2 2.500 h2" stroke="#7f95a8" stroke-width="1"/>
      <rect x="741.300" y="147" width="9" height="8.200" fill="#58a7e8"/><rect x="741.300" y="155" width="9" height="4.200" fill="#f3c545"/><path d="M743 150.300 h3.500" stroke="#cfe6fa" stroke-width="1.200"/>
      <rect x="748.100" y="152.600" width="14.900" height="8" rx="1" fill="#1c1c1c"/><rect x="750" y="151.400" width="4" height="1.600" fill="#1c1c1c"/><rect x="759" y="153.600" width="3" height="1.600" fill="#d9d9d9"/>
      <circle cx="756.200" cy="156.400" r="3.500" fill="#6fb6f0" stroke="#cfe6fa" stroke-width=".8"/><circle cx="755.300" cy="155.500" r="1.200" fill="#d5ecff"/>

      <!-- menu 10: q&a -->
      <path d="M820.600 142.800 H830.200 Q834.200 142.800 834.200 146.800 V152 Q834.200 156 830.200 156 H829.500 L828.700 159.300 L826 156 H820.600 Q816.600 156 816.600 152 V146.800 Q816.600 142.800 820.600 142.800 Z" fill="url(#gBub)" stroke="#cfe6f3" stroke-width=".6"/>
      <path d="M825 146 h2 v5.300 h-2 z M825 152.400 h2 v1.800 h-2 z" fill="#8fc320"/>
      <path d="M803.600 147.400 H815 Q820 147.400 820 152.400 V158.700 Q820 163.700 815 163.700 H810.600 L806 168.300 L806.600 163.700 H803.600 Q798.600 163.700 798.600 158.700 V152.400 Q798.600 147.400 803.600 147.400 Z" fill="url(#gBub)" stroke="#cfe6f3" stroke-width=".6"/>
      <path d="M807.300 152.900 Q807.300 150.200 810.200 150.200 Q813 150.200 813 152.600 Q813 154.200 811.400 155 Q810.300 155.600 810.300 157" fill="none" stroke="#e05a5c" stroke-width="2"/><rect x="809.200" y="158.400" width="2.200" height="2" fill="#e05a5c"/>

      <!-- menu 11: catalog -->
      <path d="M883.300 151.300 L886 150.800 V177.300 L881.500 180 Z" fill="#f4b41b"/>
      <path d="M868 152 L884 153.500 V178 L880.700 179.500 L867 176.800 Z" fill="#f7f1dc"/>
      <path d="M864 152.800 Q864 151.200 866 151 L880.800 155.600 V179.700 L864 176 Z" fill="url(#gBook)"/>
      <path d="M867.300 156 L877.800 158.800 V174.500 L867.300 172.300 Z" fill="none" stroke="#b07a34" stroke-width=".8"/>
      <path d="M859.400 176.800 L866.800 169.600 Q869.300 169 870.600 171.400 L870.100 173 L862.400 179.700 Z" fill="#f6c619" stroke="#d9a80e" stroke-width=".5"/><circle cx="867.800" cy="171.900" r=".9" fill="#8a6a12"/>

      <!-- panel buttons -->
      <path d="M248 229 H251 V226 H254 V229 H257 V232 H254 V235 H251 V232 H248 Z" fill="#93d800" stroke="#7fc000" stroke-width=".5"/>
      <path d="M270.200 230.500 L275 226 V229 H280 V232 H275 V235 Z" fill="#a9b6be"/>
      <path d="M963.200 230.400 L965 228.600 L968.200 231.600 L973 226.600 L974.400 228 L968.300 235.200 Z" fill="#7cc41c"/>
      <g><rect x="229.300" y="278" width="12.700" height="12.700" rx="1.200" fill="url(#gBtnB)"/><path d="M234.300 280.300 H237 V284.600 H239.400 L235.650 288.600 L231.900 284.600 H234.300 Z" fill="#fff"/></g>
      <g><rect x="247.200" y="278" width="12.700" height="12.700" rx="1.200" fill="url(#gBtnB)"/><path d="M252.200 288.600 H254.900 V284.300 H257.300 L253.550 280.300 L249.800 284.300 H252.200 Z" fill="#fff"/></g>

      <!-- tree icons -->
      <g transform="translate(46 275)"><use href="#pg"/></g>
      <path d="M50.600 288.200 L56.500 282.300 L62.400 288.200" fill="none" stroke="#fff" stroke-width="3.400"/><rect x="52.700" y="286" width="7.800" height="5.600" fill="#fff"/>
      <rect x="53.300" y="286.200" width="6.600" height="4.700" fill="#fbfbfb" stroke="#c9c9c9" stroke-width=".5"/><rect x="55.400" y="287.800" width="2.300" height="3.100" fill="#8b8b8b"/>
      <path d="M51 288 L56.500 282.600 L62 288" fill="none" stroke="#ff981a" stroke-width="1.700"/>
      <rect x="28.500" y="304.500" width="8" height="8" rx="1" fill="#fff" stroke="#a9bccb" stroke-width="1"/><path d="M30.500 308.500 H34.500 M32.500 306.500 V310.500" stroke="#7890a8" stroke-width="1"/>
      <path d="M49.600 304.300 L54.300 299.600 L59.600 304.600" fill="#fdfefe" stroke="#9fc0dd" stroke-width=".8"/>
      <path d="M45.800 302.600 H50.400 L51.400 304 H53 V314.700 H45.800 Z" fill="#ffa41e"/><rect x="47.300" y="305.400" width="14.700" height="9.400" rx=".6" fill="url(#gFold)"/>
      <g transform="translate(58.200 312.500)"><use href="#globe"/></g>
      <g transform="translate(46 325)"><use href="#pg"/></g><g transform="translate(57.400 336.400)"><use href="#globe"/></g>
      <g transform="translate(46 350)"><use href="#pg"/></g><g transform="translate(57.400 361.400)"><use href="#globe"/></g>
      <g transform="translate(46 375)"><use href="#pg"/></g><g transform="translate(57.400 386.400)"><use href="#globe"/></g>
      <g transform="translate(46 400)"><use href="#pg"/></g><g transform="translate(57.400 411.400)"><use href="#globe"/></g>

      <!-- help icons -->
      <use href="#help" x="773.100" y="386"/><use href="#help" x="927.500" y="412"/><use href="#help" x="927.500" y="438"/><use href="#help" x="927.500" y="490"/>
      <use href="#help" x="927.500" y="602"/><use href="#help" x="927.500" y="628"/><use href="#help" x="927.500" y="654"/>
    </svg>


  </div>
  <div id="sb" class="abs">
    <div class="abs" style="left:0;top:18px;width:15px;height:677px;border:1px solid #979797;border-radius:2px;background:linear-gradient(90deg,#f7f7f7 0,#ededed 38%,#d4d4d7 52%,#cbcbcf 80%,#d0d0d4 100%);box-shadow:inset 1px 1px 0 0 rgba(255,255,255,.75)"></div>
    <svg class="abs" style="left:0;top:0" width="16" height="763" viewBox="1010 77 16 763">
      <path d="M1014.800 87.800 L1018.500 83.600 L1022.200 87.800 Z" fill="#303030"/>
      <path d="M1014.800 830.300 L1018.400 834.300 L1022 830.300 Z" fill="#303030"/>
      <path d="M1014 430.500 H1021 M1014 432.500 H1021 M1014 434.500 H1021 M1014 436.500 H1021" stroke="#5d5d5d" stroke-width="1" shape-rendering="crispEdges"/>
    </svg>
  </div>
</div>
</body>
</html>
